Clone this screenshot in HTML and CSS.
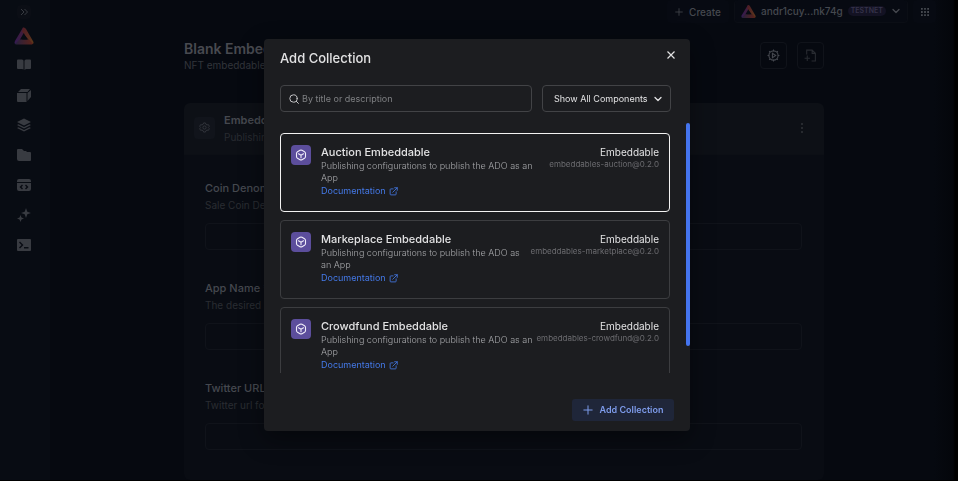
FILE: index.html
```
<!DOCTYPE html>
<html lang="en">
<head>
<meta charset="utf-8">
<title>Add Collection</title>
<link rel="stylesheet" href="styles.css">
</head>
<body>
<svg class="defs" aria-hidden="true">
  <defs>
    <linearGradient id="lg-left" x1="0" y1="1" x2="1" y2="0"><stop offset="0" stop-color="#341a54"/><stop offset="1" stop-color="#451e30"/></linearGradient>
    <linearGradient id="lg-right" x1="0" y1="0" x2="1" y2="1"><stop offset="0" stop-color="#4d1a26"/><stop offset="1" stop-color="#5e3a1a"/></linearGradient>
    <linearGradient id="lg-base" x1="0" y1="0" x2="1" y2="0"><stop offset="0" stop-color="#25203f"/><stop offset="1" stop-color="#5c2218"/></linearGradient>
    <symbol id="logo" viewBox="0 0 20 20">
      <path d="M9 1.500 12.500 6.500 6 17 1 18Q0 17 1 15Z" fill="url(#lg-left)"/>
      <path d="M9 1.500Q11 1 12 3L19.500 16Q20 18 18 18L15.500 15 8 5.500Z" fill="url(#lg-right)"/>
      <path d="M1 18 5.500 13.500H15L19 17.500 18 18.500H2Z" fill="url(#lg-base)"/>
      <path d="M9.800 7 13 13.500H6Z" fill="#080c13"/>
    </symbol>
    <symbol id="cube" viewBox="0 0 24 24" fill="none" stroke="currentColor" stroke-width="2.200" stroke-linejoin="round" stroke-linecap="round">
      <path d="M10 2.700Q12 1.600 14 2.700L19 5.500Q21 6.700 21 9V15Q21 17.300 19 18.500L14 21.300Q12 22.400 10 21.300L5 18.500Q3 17.300 3 15V9Q3 6.700 5 5.500ZM7 9.500 12 12.300 17 9.500M12 12.300V17.500"/>
    </symbol>
    <symbol id="external" viewBox="0 0 24 24" fill="none" stroke="currentColor" stroke-width="2.200" stroke-linejoin="round" stroke-linecap="round">
      <path d="M11 5H5Q3 5 3 7V19Q3 21 5 21H17Q19 21 19 19V13M15 2H22V9M22 2 10 14"/>
    </symbol>
    <symbol id="plus" viewBox="0 0 12 12" fill="none" stroke="currentColor" stroke-width="1.200" stroke-linecap="round"><path d="M6 1V11M1 6H11"/></symbol>
    <symbol id="chevron" viewBox="0 0 10 10" fill="none" stroke="currentColor" stroke-width="1.300" stroke-linecap="round" stroke-linejoin="round"><path d="M2 3.500 5 6.500 8 3.500"/></symbol>
    <symbol id="gear" viewBox="0 0 24 24" fill="none" stroke="currentColor" stroke-width="2" stroke-linejoin="round">
      <path d="M10 2H14L15 5 17.500 6.400 20.500 5.800 22.500 9.300 20.500 11.500V12.500L22.500 14.700 20.500 18.200 17.500 17.600 15 19 14 22H10L9 19 6.500 17.600 3.500 18.200 1.500 14.700 3.500 12.500V11.500L1.500 9.300 3.500 5.800 6.500 6.400 9 5Z"/><circle cx="12" cy="12" r="3.500"/>
    </symbol>
  </defs>
</svg>

<div class="app">
  <nav class="sidebar" aria-label="Main">
    <button class="expand" aria-label="Expand"><svg viewBox="0 0 10 10" fill="none" stroke="currentColor"><path d="M2 2 5 5 2 8M5.500 2 8.500 5 5.500 8"/></svg></button>
    <a class="brand" href="#" aria-label="Home"><svg><use href="#logo"/></svg></a>
    <a href="#" aria-label="Learn"><svg viewBox="0 0 14 14"><path d="M1 1.500H5Q6.500 1.500 6.500 3V11.500L5 11H1Q0 11 0 10V2.500Q0 1.500 1 1.500ZM9 1.500H13Q14 1.500 14 2.500V10Q14 11 13 11H9L7.500 12V3Q7.500 1.500 9 1.500Z"/></svg></a>
    <a href="#" aria-label="Components"><svg viewBox="0 0 14 14"><path d="M0 5H9.500V14H1Q0 14 0 13ZM1 4 4 1H13L10.500 4ZM10.500 5 14 2V9L10.500 13Z"/></svg></a>
    <a href="#" aria-label="Layers"><svg viewBox="0 0 14 14"><path d="M7 .5 14 4 7 7.500 0 4ZM1.500 6.200 7 9 12.500 6.200 14 7 7 10.500 0 7ZM1.500 9.200 7 12 12.500 9.200 14 10 7 13.500 0 10Z"/></svg></a>
    <a href="#" aria-label="Files"><svg viewBox="0 0 14 14"><path d="M1 1H5L7 3H9L10 4H13Q14 4 14 5V12Q14 13 13 13H2Q0 13 0 11V2Q0 1 1 1Z"/></svg></a>
    <a href="#" aria-label="Embeddables"><svg viewBox="0 0 14 14"><path fill-rule="evenodd" d="M2 1H12Q14 1 14 3V4H0V3Q0 1 2 1ZM0 5H14V11Q14 13 12 13H2Q0 13 0 11ZM5 6.500 2.500 9 5 11.500 6 10.500 4.500 9 6 7.500ZM9 6.500 8 7.500 9.500 9 8 10.500 9 11.500 11.500 9Z"/></svg></a>
    <a href="#" aria-label="Assistant"><svg viewBox="0 0 14 14"><path d="M9 0 10.300 3.700 14 5 10.300 6.300 9 10 7.700 6.300 4 5 7.700 3.700ZM3.500 7 4.500 9.500 7 10.500 4.500 11.500 3.500 14 2.500 11.500 0 10.500 2.500 9.500Z"/></svg></a>
    <a href="#" aria-label="Console"><svg viewBox="0 0 14 14"><path fill-rule="evenodd" d="M1 1H13Q14 1 14 2V12Q14 13 13 13H1Q0 13 0 12V2Q0 1 1 1ZM3 3.500 2 4.500 4.500 7 2 9.500 3 10.500 6.500 7ZM7 9V10.500H11.500V9Z"/></svg></a>
  </nav>

  <div class="page">
    <header class="topbar">
      <button class="create"><svg><use href="#plus"/></svg>Create</button>
      <button class="wallet"><svg class="wallet-logo"><use href="#logo"/></svg>andr1cuy...nk74g<span class="network">TESTNET</span><svg class="caret"><use href="#chevron"/></svg></button>
      <button class="apps" aria-label="Apps"><svg viewBox="0 0 9 9" fill="currentColor"><path d="M0 0H2V2H0ZM3.500 0H5.500V2H3.500ZM7 0H9V2H7ZM0 3.500H2V5.500H0ZM3.500 3.500H5.500V5.500H3.500ZM7 3.500H9V5.500H7ZM0 7H2V9H0ZM3.500 7H5.500V9H3.500ZM7 7H9V9H7Z"/></svg></button>
    </header>

    <main class="content">
      <div class="heading">
        <div>
          <h1>Blank Embeddable</h1>
          <p>NFT embeddable app</p>
        </div>
        <div class="tools">
          <button aria-label="Run settings"><svg viewBox="0 0 24 24" fill="none" stroke="currentColor" stroke-width="2"><circle cx="12" cy="12" r="8.500"/><path d="M12 1V4M12 20V23M1 12H4M20 12H23M4 4 6 6M18 18 20 20M4 20 6 18M18 6 20 4"/><path d="M10 8V16L16 12Z"/></svg></button>
          <button class="dim" aria-label="Import file"><svg viewBox="0 0 24 24" fill="none" stroke="currentColor" stroke-width="2"><path d="M5 10V2H15L21 8V22H14M15 2V8H21M1 17H11M6 12V22"/></svg></button>
        </div>
      </div>

      <section class="panel">
        <div class="panel-head">
          <span class="panel-icon"><svg><use href="#gear"/></svg></span>
          <div class="panel-title">
            <h2>Embeddable</h2>
            <p>Publishing configurations</p>
          </div>
          <button class="more" aria-label="More"><svg viewBox="0 0 4 12" fill="currentColor"><circle cx="2" cy="2" r="1"/><circle cx="2" cy="6" r="1"/><circle cx="2" cy="10" r="1"/></svg></button>
        </div>
        <form class="fields">
          <div class="field"><label for="denom">Coin Denom</label><p>Sale Coin Denom</p><input id="denom" type="text"></div>
          <div class="field"><label for="name">App Name <span>*</span></label><p>The desired name</p><input id="name" type="text"></div>
          <div class="field"><label for="twitter">Twitter URL</label><p>Twitter url for app</p><input id="twitter" type="text"></div>
        </form>
      </section>
    </main>
  </div>
</div>

<div class="overlay">
  <div class="modal" role="dialog" aria-modal="true" aria-labelledby="dialog-title">
    <div class="modal-head">
      <h2 id="dialog-title">Add Collection</h2>
      <button class="close" aria-label="Close"><svg viewBox="0 0 8 8" fill="none" stroke="currentColor" stroke-width="1.200"><path d="M.5 .5 7.500 7.500M7.500 .5 .5 7.500"/></svg></button>
    </div>
    <div class="filters">
      <label class="search">
        <svg viewBox="0 0 10 10" fill="none" stroke="currentColor" stroke-linecap="round"><circle cx="4.500" cy="4.500" r="3.700"/><path d="M7.300 7.300 9.400 9.400"/></svg>
        <input type="text" placeholder="By title or description" aria-label="Search">
      </label>
      <div class="select">
        <select aria-label="Component type"><option>Show All Components</option></select>
        <svg><use href="#chevron"/></svg>
      </div>
    </div>
    <div class="results">
      <div class="list">
        <article class="card selected">
          <span class="card-icon"><svg><use href="#cube"/></svg></span>
          <div class="card-main">
            <h3>Auction Embeddable</h3>
            <p>Publishing configurations to publish the ADO as an App</p>
            <a href="#">Documentation<svg><use href="#external"/></svg></a>
          </div>
          <div class="card-meta"><span>Embeddable</span><small>embeddables-auction@0.2.0</small></div>
        </article>
        <article class="card">
          <span class="card-icon"><svg><use href="#cube"/></svg></span>
          <div class="card-main">
            <h3>Markeplace Embeddable</h3>
            <p>Publishing configurations to publish the ADO as an App</p>
            <a href="#">Documentation<svg><use href="#external"/></svg></a>
          </div>
          <div class="card-meta"><span>Embeddable</span><small>embeddables-marketplace@0.2.0</small></div>
        </article>
        <article class="card">
          <span class="card-icon"><svg><use href="#cube"/></svg></span>
          <div class="card-main">
            <h3>Crowdfund Embeddable</h3>
            <p>Publishing configurations to publish the ADO as an App</p>
            <a href="#">Documentation<svg><use href="#external"/></svg></a>
          </div>
          <div class="card-meta"><span>Embeddable</span><small>embeddables-crowdfund@0.2.0</small></div>
        </article>
      </div>
      <div class="track"><div class="thumb"></div></div>
    </div>
    <div class="modal-foot">
      <button class="add"><svg><use href="#plus"/></svg>Add Collection</button>
    </div>
  </div>
</div>
</body>
</html>
```

FILE: styles.css
```
* { box-sizing: border-box; }
body, h1, h2, h3, p { margin: 0; }
body {
  font-family: Inter, "Liberation Sans", sans-serif;
  font-size: 10px;
  line-height: 12px;
  background: #000;
  color: #45484f;
  overflow: hidden;
}
button, input, select { font: inherit; color: inherit; margin: 0; padding: 0; border: 0; background: none; }
a { color: inherit; text-decoration: none; }
svg { display: block; flex: none; }
.defs { position: absolute; width: 0; height: 0; }

.app { display: flex; height: 100vh; overflow: hidden; border-bottom: 1px solid #000; background: linear-gradient(to left, #000 0, #000 3px, #04060b 5px, #060910 24px, #060910 100%); }

.sidebar { display: flex; flex-direction: column; align-items: center; gap: 16px; width: 50px; padding: 5px 2px 0 0; background: #080c13; color: #383b41; }
.sidebar svg { width: 14px; height: 14px; fill: currentColor; }
.sidebar .expand { display: grid; place-items: center; width: 14px; height: 14px; margin-bottom: -9px; border-radius: 4px; background: #0b0e15; }
.sidebar .expand svg { width: 10px; height: 10px; fill: none; }
.sidebar .brand { margin-bottom: -4px; }
.sidebar .brand svg { width: 20px; height: 20px; }

.page { flex: 1; min-width: 0; display: flex; flex-direction: column; }
.topbar { display: flex; justify-content: flex-end; gap: 5px; height: 23px; padding-right: 22px; font-weight: 500; }
.topbar button { display: flex; align-items: center; justify-content: center; border-radius: 4px; background: #070a12; }
.create { width: 62px; gap: 6px; }
.create svg { width: 8px; height: 8px; }
.topbar .wallet { width: 174px; gap: 5px; border: 1px solid #0b0e15; border-top: 0; }
.wallet-logo { width: 15px; height: 15px; }
.network { padding: 0 3px; border-radius: 5px; background: #131223; color: #35324a; font-size: 7px; line-height: 10px; font-weight: 600; }
.caret { width: 10px; height: 10px; }
.apps { width: 23px; }
.apps svg { width: 8px; height: 8px; }

.content { width: 640px; max-width: 100%; margin: 0 auto; flex: 1; display: flex; flex-direction: column; padding-top: 17px; }
.heading { display: flex; justify-content: space-between; height: 63px; }
.heading h1 { font-size: 14px; line-height: 18px; font-weight: 600; color: #484a50; }
.heading p { margin-top: 1px; color: #32353b; }
.tools { display: flex; gap: 10px; padding-top: 2px; }
.tools button { display: grid; place-items: center; width: 27px; height: 27px; border: 1px solid #10131a; border-radius: 4px; }
.tools svg { width: 13px; height: 13px; }
.tools .dim { color: #282b31; }

.panel { flex: 1; border-radius: 6px; background: #090c13; }
.panel-head { display: flex; align-items: center; gap: 9px; height: 52px; padding: 0 20px 2px 10px; border-radius: 6px 6px 0 0; background: #0d1016; border-bottom: 1px solid #0c0f15; }
.panel-icon { display: grid; place-items: center; width: 21px; height: 22px; border-radius: 4px; background: #11141b; color: #35383e; }
.panel-icon svg { width: 11px; height: 11px; }
.panel-title { flex: 1; }
.panel-title h2 { font-size: 11px; line-height: 14px; font-weight: 600; }
.panel-title p { margin-top: 4px; color: #282b31; }
.more { color: #303339; }
.more svg { width: 4px; height: 12px; }
.fields { display: flex; flex-direction: column; gap: 31px; padding: 26px 22px 0 21px; }
.field { display: flex; flex-direction: column; height: 69px; }
.field label { font-size: 11px; line-height: 14px; font-weight: 500; }
.field label span { color: #402027; }
.field p { margin-top: 4px; color: #292c32; }
.field input { height: 27px; margin-top: auto; border: 1px solid #10131a; border-radius: 4px; }

.overlay { position: fixed; inset: 0 4px 0 0; display: flex; align-items: flex-start; justify-content: center; padding-top: 39px; }
.modal { width: 426px; border-radius: 4px; background: #1c1d20; color: #e2e2e3; padding-bottom: 10px; box-shadow: 0 8px 24px rgba(0, 0, 0, .4); }
.modal-head { display: flex; justify-content: space-between; align-items: flex-start; padding: 11px 15px 18px 16px; }
.modal-head h2 { font-size: 13px; line-height: 17px; font-weight: 500; }
.close svg { width: 8px; height: 8px; }
.close { padding: 1px 0; }
.filters { display: flex; gap: 10px; padding: 0 19px 0 16px; height: 27px; }
.search { flex: 1; display: flex; align-items: center; gap: 3px; padding: 0 8px; border: 1px solid #424346; border-radius: 4px; color: #c4c4c6; }
.search svg { width: 10px; height: 10px; }
.search input { flex: 1; min-width: 0; outline: 0; font-size: 9px; }
.search input::placeholder { color: #7f8083; opacity: 1; }
.select { display: grid; align-items: center; width: 129px; border: 1px solid #424346; border-radius: 4px; font-size: 9px; }
.select select { grid-area: 1 / 1; height: 25px; padding-left: 11px; appearance: none; outline: 0; }
.select svg { grid-area: 1 / 1; justify-self: end; width: 10px; height: 10px; margin-right: 7px; pointer-events: none; }

.results { display: flex; height: 250px; margin-top: 11px; }
.list { flex: 1; display: flex; flex-direction: column; gap: 8px; padding: 10px 16px 0 16px; overflow: hidden; }
.track { width: 4px; }
.thumb { height: 89%; border-radius: 2px; background: #4474ee; }
.card { flex: none; display: flex; align-items: flex-start; padding: 11px 10px 14px; border: 1px solid #3c3d40; border-radius: 4px; }
.card.selected { border-color: #f2f2f2; }
.card-icon { flex: none; display: grid; place-items: center; width: 20px; height: 20px; margin-right: 10px; border-radius: 4px; background: #5c4e9c; color: #f0edfa; }
.card-icon svg { width: 12px; height: 12px; }
.card-main { flex: 1; min-width: 0; font-size: 9px; }
.card h3 { font-size: 11px; line-height: 15px; font-weight: 500; }
.card p { font-weight: 300; color: #a6a7aa; }
.card a { display: flex; align-items: center; gap: 3px; padding-top: 1px; color: #4479e8; }
.card a svg { width: 9px; height: 9px; }
.card-meta { flex: none; display: flex; flex-direction: column; align-items: flex-end; padding-left: 1px; line-height: 14px; }
.card-meta small { font-size: 8px; line-height: 10px; color: #6c6c70; }

.modal-foot { display: flex; justify-content: flex-end; padding: 26px 16px 0; }
.add { display: flex; align-items: center; justify-content: center; gap: 7px; width: 102px; height: 22px; border-radius: 3px; background: #1f2639; color: #7d9bea; font-size: 9px; font-weight: 600; }
.add svg { width: 10px; height: 10px; }
```
